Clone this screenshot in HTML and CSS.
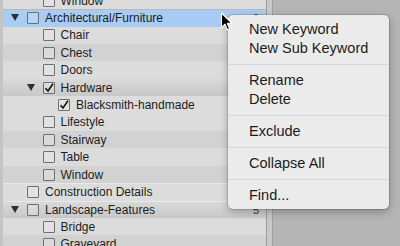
FILE: index.html
```html
<!DOCTYPE html>
<html lang="en">
<head>
  <meta charset="UTF-8">
  <title>Keyword List</title>
  <link rel="stylesheet" href="styles.css">
</head>
<body>
  <div class="layout">
    <div class="tree">
      <div class="row lvl1 light"><span class="toggle"></span><span class="box"></span><span class="label">Window</span></div>
      <div class="row lvl0 selected"><span class="toggle open"></span><span class="box"></span><span class="label">Architectural/Furniture</span><span class="count">3</span></div>
      <div class="row lvl1 light"><span class="toggle"></span><span class="box"></span><span class="label">Chair</span></div>
      <div class="row lvl1 dark"><span class="toggle"></span><span class="box"></span><span class="label">Chest</span></div>
      <div class="row lvl1 light"><span class="toggle"></span><span class="box"></span><span class="label">Doors</span></div>
      <div class="row lvl1 parent"><span class="toggle open"></span><span class="box checked"><svg viewBox="0 0 12 12"><path d="M2.5 6.2 L5 9 L10 1.8" fill="none" stroke="#111" stroke-width="1.6"/></svg></span><span class="label">Hardware</span></div>
      <div class="row lvl2 light"><span class="toggle"></span><span class="box checked"><svg viewBox="0 0 12 12"><path d="M2.5 6.2 L5 9 L10 1.8" fill="none" stroke="#111" stroke-width="1.6"/></svg></span><span class="label">Blacksmith-handmade</span></div>
      <div class="row lvl1 light"><span class="toggle"></span><span class="box"></span><span class="label">Lifestyle</span></div>
      <div class="row lvl1 dark"><span class="toggle"></span><span class="box"></span><span class="label">Stairway</span></div>
      <div class="row lvl1 light"><span class="toggle"></span><span class="box"></span><span class="label">Table</span></div>
      <div class="row lvl1 dark"><span class="toggle"></span><span class="box"></span><span class="label">Window</span></div>
      <div class="row lvl0 light top"><span class="toggle"></span><span class="box"></span><span class="label">Construction Details</span></div>
      <div class="row lvl0 parent top"><span class="toggle open"></span><span class="box"></span><span class="label">Landscape-Features</span><span class="count">5</span></div>
      <div class="row lvl1 light"><span class="toggle"></span><span class="box"></span><span class="label">Bridge</span></div>
      <div class="row lvl1 dark"><span class="toggle"></span><span class="box"></span><span class="label">Graveyard</span></div>
    </div>
    <div class="divider"></div>
    <div class="pane"></div>
  </div>

  <ul class="menu">
    <li>New Keyword</li>
    <li>New Sub Keyword</li>
    <li class="sep"></li>
    <li>Rename</li>
    <li>Delete</li>
    <li class="sep"></li>
    <li>Exclude</li>
    <li class="sep"></li>
    <li>Collapse All</li>
    <li class="sep"></li>
    <li>Find...</li>
  </ul>

  <svg class="cursor" viewBox="0 0 13 19" width="13" height="19">
    <path d="M1.5 1 L1.5 15.5 L5 12.2 L7.4 17.8 L9.6 16.8 L7.3 11.4 L12 11.4 Z" fill="#000" stroke="#fff" stroke-width="1.1" stroke-linejoin="round"/>
  </svg>
</body>
</html>
```

FILE: styles.css
```css
body {
  margin: 0;
  font-family: "Liberation Sans", Arial, sans-serif;
  background-color: #b5b5b5;
  overflow: hidden;
}

.layout {
  display: flex;
  height: 246px;
}

.tree {
  width: 263px;
  border-left: 3px solid #c4c4c4;
  border-right: 1px solid #9c9c9c;
  background-color: #dadada;
  overflow: hidden;
}

.divider {
  width: 5px;
  background-color: #c9c9c9;
  border-right: 1px solid #a0a0a0;
}

.pane {
  flex: 1;
  background-color: #b5b5b5;
}

.row {
  display: flex;
  align-items: center;
  height: 17.4px;
  box-sizing: border-box;
  font-size: 12px;
  color: #1d1d1d;
  white-space: nowrap;
}

.row:first-child {
  margin-top: -8.1px;
}

.lvl0 { padding-left: 4px; }
.lvl1 { padding-left: 19.5px; }
.lvl2 { padding-left: 35px; }

.light { background-color: #dcdcdc; }
.dark { background-color: #d2d2d2; }

.parent {
  background: linear-gradient(#d9d9d9, #c8c8c8);
}

.top {
  border-top: 1px solid #e9e9e9;
}

.selected {
  background-color: #a8ccf4;
  border-top: 1px solid #b9b9b9;
}

.toggle {
  width: 20px;
  height: 12px;
  flex-shrink: 0;
  position: relative;
}

.toggle.open::before {
  content: "";
  position: absolute;
  left: 4px;
  top: 2px;
  border-left: 4.5px solid transparent;
  border-right: 4.5px solid transparent;
  border-top: 7.5px solid #2e2e2e;
}

.box {
  width: 12px;
  height: 12px;
  box-sizing: border-box;
  border: 1px solid #6f6f6f;
  border-radius: 1px;
  background-color: rgba(255, 255, 255, 0.18);
  flex-shrink: 0;
  margin-right: 6px;
}

.box svg {
  display: block;
  width: 12px;
  height: 12px;
  margin: -1px 0 0 -1px;
}

.label {
  flex: 1;
}

.count {
  padding-right: 7px;
  font-size: 11px;
  color: #333;
}

.menu {
  position: absolute;
  left: 228px;
  top: 15px;
  width: 161px;
  margin: 0;
  padding: 4.5px 0 4px;
  list-style: none;
  background-color: #ebebeb;
  border-radius: 5px;
  box-shadow: 0 0 0 1px rgba(0, 0, 0, 0.12), 0 3px 8px rgba(0, 0, 0, 0.28);
  font-size: 14.5px;
  color: #1b1b1b;
}

.menu li {
  height: 19px;
  line-height: 19px;
  padding-left: 21px;
}

.menu .sep {
  height: 13px;
  padding: 0;
  position: relative;
}

.menu .sep::after {
  content: "";
  position: absolute;
  left: 0;
  right: 0;
  top: 6px;
  height: 1.5px;
  background-color: #d7d7d7;
}

.cursor {
  position: absolute;
  left: 220px;
  top: 12px;
}
```
